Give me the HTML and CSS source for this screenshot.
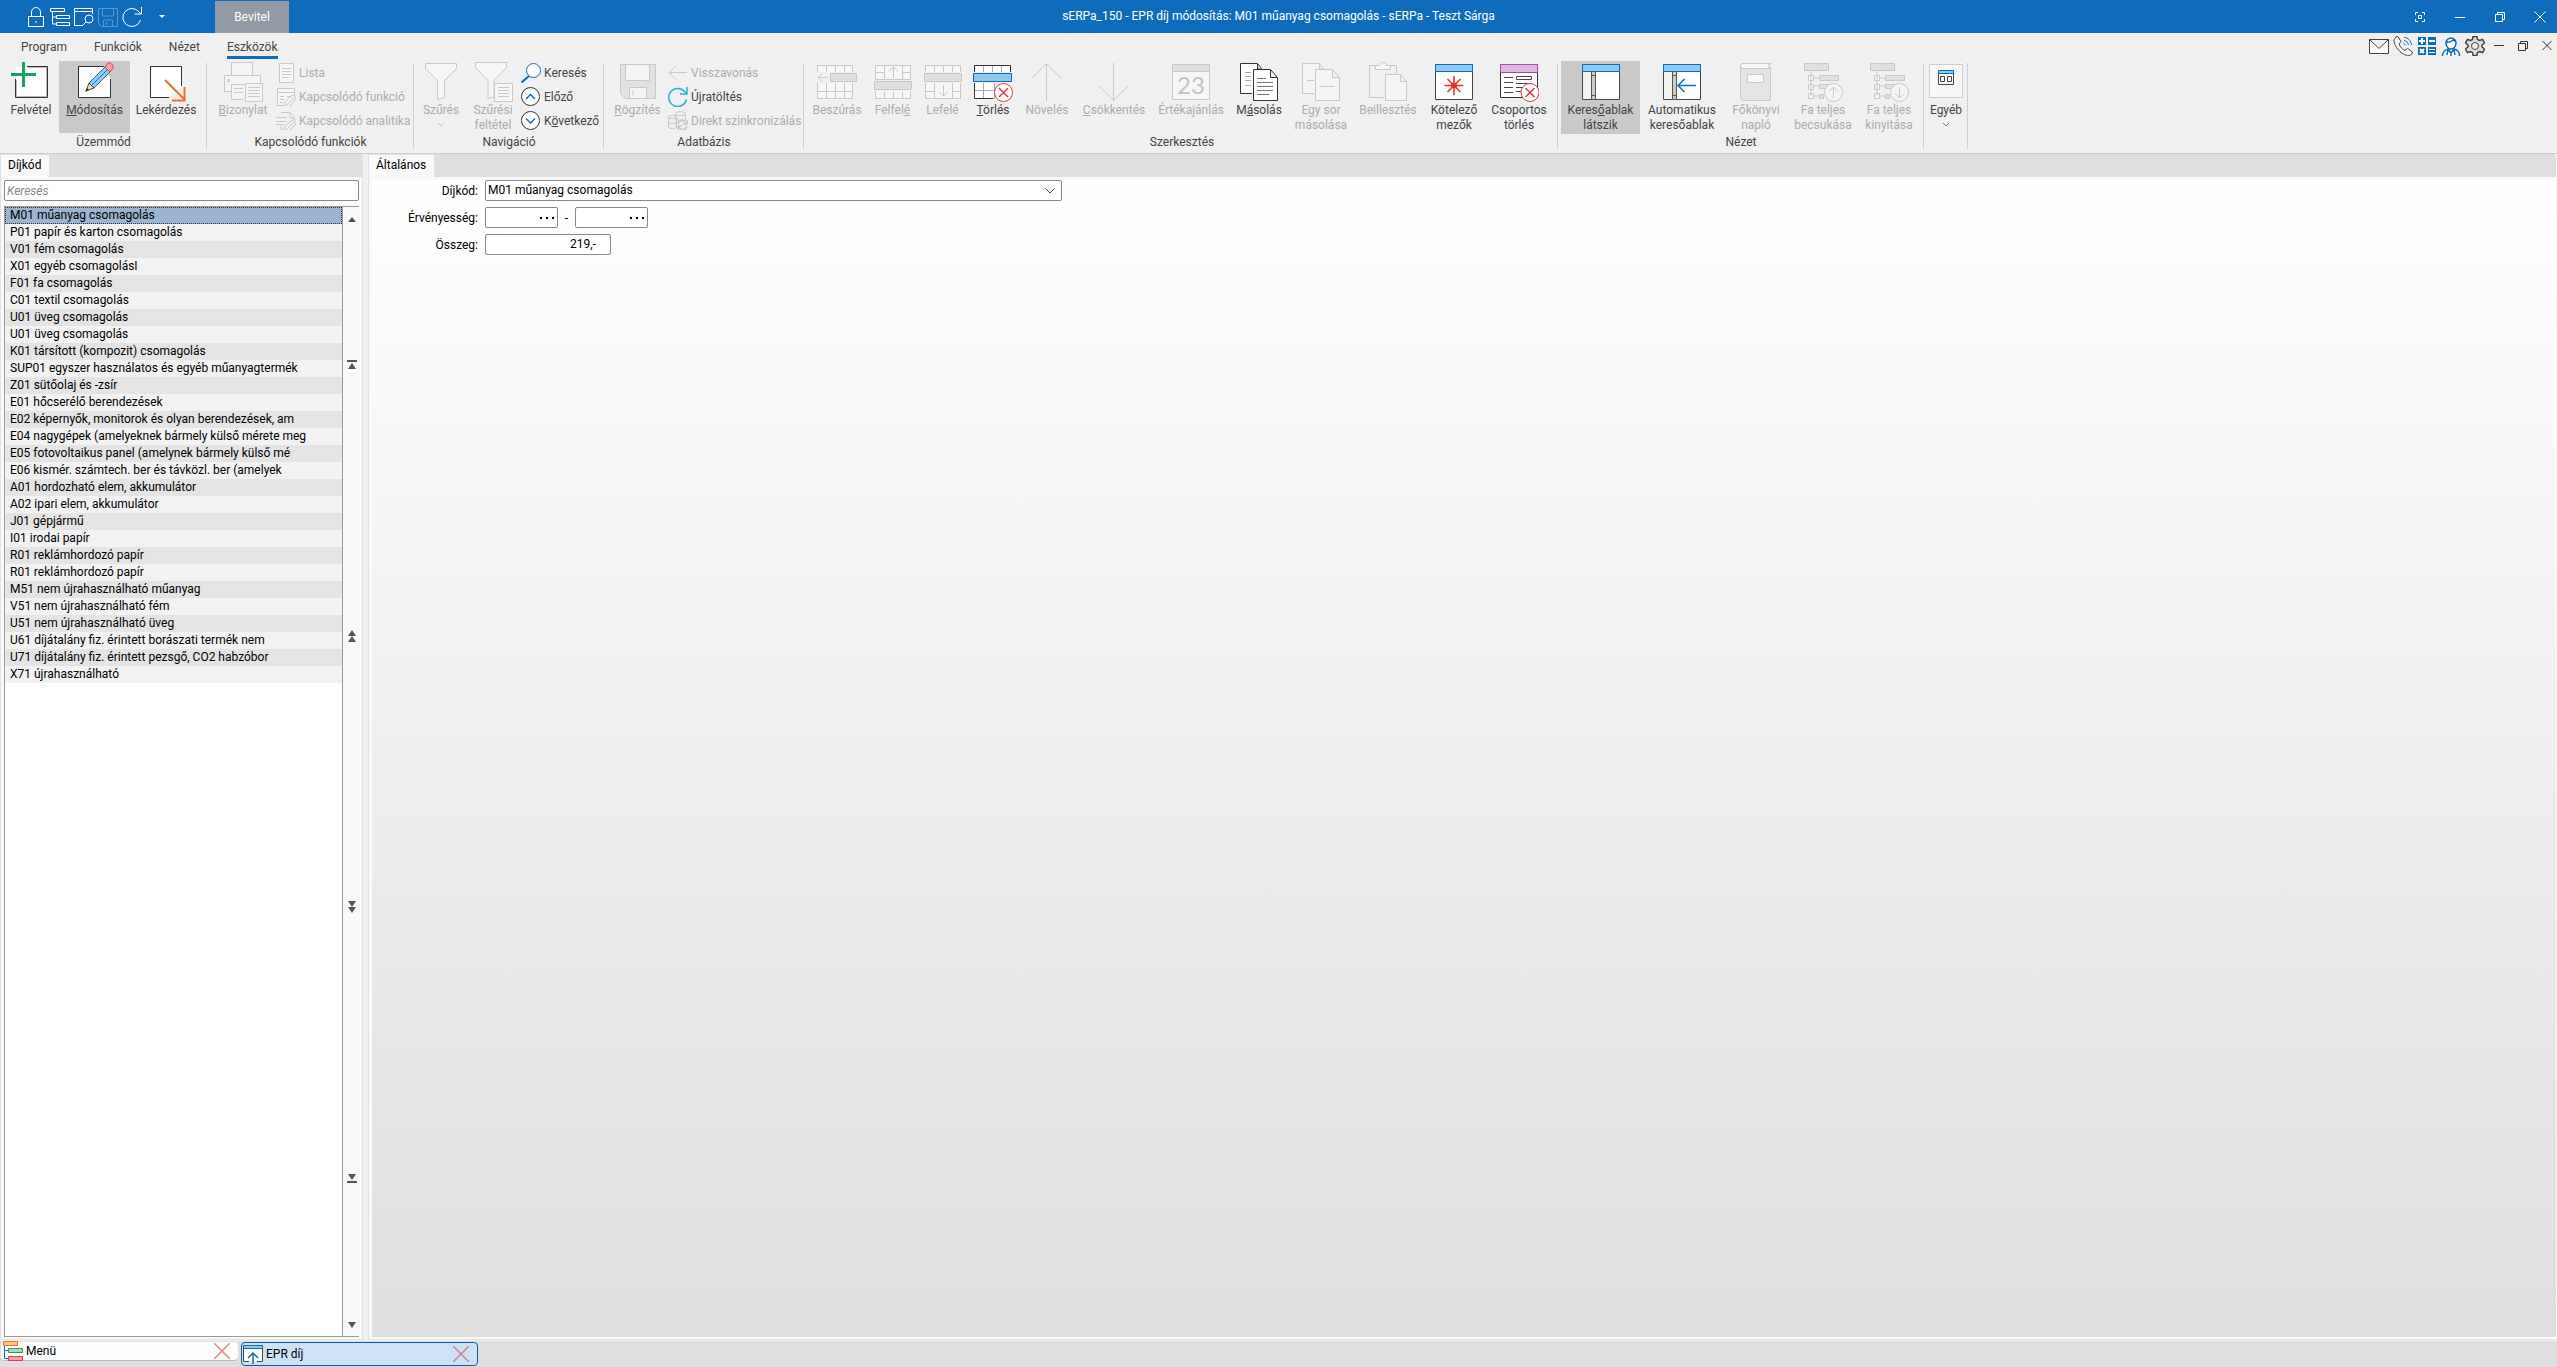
FILE: index.html
```html
<!DOCTYPE html>
<html lang="hu">

<head>
    <meta charset="UTF-8">
    <meta name="viewport" content="width=device-width, initial-scale=1.0">
    <link rel="stylesheet" href="styles.css">
    <title>sERPa_150 - EPR díj módosítás</title>
</head>

<body>

    <header class="titlebar">
        <div class="quick">
            <button aria-label="Zárolás"><svg width="20" height="20" viewBox="0 0 20 20"><path d="M2.500 9.500h15v10h-15zM5.500 9V5a4.500 4.500 0 0 1 9 0v4"/><path d="M10 14v2"/></svg></button>
            <button aria-label="Menüfa"><svg width="20" height="20" viewBox="0 0 20 20"><path d="M.5 1.500h14v3H.5zM6.500 8.500h13v3h-13zM6.500 15.500h13v3h-13zM2.500 5v12h4M2.500 10h4"/></svg></button>
            <button aria-label="Ablak keresése"><svg width="20" height="20" viewBox="0 0 20 20"><path d="M9 18.500H.5v-17h18V7M.5 4.500h18"/><circle cx="15" cy="12" r="4"/><path d="M12 15l-4 4"/></svg></button>
            <button aria-label="Mentés" disabled><svg width="20" height="20" viewBox="0 0 20 20"><path d="M.5 1.500h19v18h-16l-3-3zM4.500 2v7h11V2M5.500 19v-6h9v6M8.500 15v3"/></svg></button>
            <button aria-label="Frissítés"><svg width="20" height="20" viewBox="0 0 20 20"><path d="M18.500 13a9 9 0 1 1-1.500-8l2 2M19.500 0v7h-7"/></svg></button>
            <button class="more" aria-label="Továbbiak"><svg width="6" height="3" viewBox="0 0 6 3"><path class="solid" d="M0 0h6L3 3z"/></svg></button>
        </div>
        <button class="context-tab">Bevitel</button>
        <h1>sERPa_150 - EPR díj módosítás: M01 műanyag csomagolás - sERPa - Teszt Sárga</h1>
        <div class="window-buttons">
            <button aria-label="Fókusz"><svg width="12" height="12" viewBox="0 0 12 12"><path d="M1.500 4V1.500H4M8 1.500h2.500V4M10.500 8v2.500H8M4 10.500H1.500V8M4.500 4.500h3v3h-3z"/></svg></button>
            <button aria-label="Kis méret"><svg width="12" height="12" viewBox="0 0 12 12"><path d="M1 6.500h10"/></svg></button>
            <button aria-label="Előző méret"><svg width="12" height="12" viewBox="0 0 12 12"><path d="M1.500 3.500h7v7h-7zM3.500 3V1.500h7v7H9"/></svg></button>
            <button aria-label="Bezárás"><svg width="12" height="12" viewBox="0 0 12 12"><path d="M.5.5l11 11M11.500.5l-11 11"/></svg></button>
        </div>
    </header>

    <section class="ribbon">
        <div class="menu-row">
            <nav class="menu">
                <a href="#">Program</a>
                <a href="#">Funkciók</a>
                <a href="#">Nézet</a>
                <a href="#" class="active">Eszközök</a>
            </nav>
            <div class="menu-tools">
                <button aria-label="Levél"><svg width="20" height="20" viewBox="0 0 20 20"><path fill="#fff" stroke="#444" d="M.5 3.500h19v14H.5zM.5 3.500l9.500 9 9.500-9"/></svg></button>
                <button aria-label="Telefon"><svg width="20" height="20" viewBox="0 0 20 20"><path fill="#fff" stroke="#444" d="M3 1l2-.5L8 5.500 6 8c1 3 3 5 6 6.500l2.500-2 5 3.500-1 2.500C12 23 .500 11 1 4z"/><path stroke="#0f6cbd" d="M11 1.500c4 0 7 3 7.500 7.500M11 4.500c2.500.5 4 2 4.500 4.500M10.500 7.500l2 1.500"/></svg></button>
                <button aria-label="Számológép"><svg width="20" height="20" viewBox="0 0 20 20"><path fill="#0f6cbd" d="M1 1h8v8H1zM11 1h8v8h-8zM1 11h8v8H1zM11 11h8v8h-8z"/><path stroke="#fff" stroke-width="2" d="M2 5h6M5 2v6M12 5h6M3 13l4 4M7 13l-4 4"/><path stroke="#fff" d="M12 13.500h6M12 16.500h6"/></svg></button>
                <button aria-label="Ügyfél"><svg width="20" height="20" viewBox="0 0 20 20"><path fill="#fff" stroke="#0f6cbd" stroke-width="1.500" d="M5 7a5 5 0 0 1 10 0c0 3-2 6-5 6S5 10 5 7zM5 6c4 1 6-1 7-2l3 2M1.500 20c0-5 3-6 5.500-7l3 4 3-4c3 1 5.500 2 5.500 7M7 14l-1 5M13 14l1 5M10 16v4"/></svg></button>
                <button aria-label="Beállítások"><svg width="20" height="20" viewBox="0 0 20 20"><path fill="#ddd" stroke="#444" stroke-width="1.500" d="M8 .5h4l.5 3 2 1 3-1 2 3.500-2.500 2v2l2.500 2-2 3.500-3-1-2 1-.5 3H8l-.5-3-2-1-3 1L.5 13 3 11V9L.5 7l2-3.500 3 1 2-1z"/><circle cx="10" cy="10" r="3.500" fill="#f0f0f0" stroke="#444"/></svg></button>
                <button aria-label="Kis méret"><svg width="20" height="20" viewBox="0 0 20 20"><path stroke="#333" d="M5 9.500h10"/></svg></button>
                <button aria-label="Előző méret"><svg width="20" height="20" viewBox="0 0 20 20"><path stroke="#333" d="M5.500 7.500h7v7h-7zM7.500 7V5.500h7v7H13"/></svg></button>
                <button aria-label="Bezárás"><svg width="20" height="20" viewBox="0 0 20 20"><path stroke="#333" d="M5.500 5l9 9M14.500 5l-9 9"/></svg></button>
            </div>
        </div>

        <div class="groups">
            <div class="group mode">
                <div class="items">
                    <button class="big"><svg width="40" height="42" viewBox="0 0 40 42"><path fill="#fff" d="M5 6h31v31H5z"/><path stroke="#333" d="M16 5.500h20.500v31h-32V18"/><path stroke="#bbb" d="M17 6.500h18.500v29h-30V19"/><path stroke="#1aa35a" stroke-width="3" d="M0 13.500h25M12.500 1v25"/></svg>Felvétel</button>
                    <button class="big pressed"><svg width="40" height="42" viewBox="0 0 40 42"><path fill="#fff" stroke="#333" d="M29 5.500H3.500v31h32V18"/><path fill="#90caf0" stroke="#1b6cb5" d="M14 22L30 6l5 5-16 16z"/><path stroke="#1b6cb5" d="M16.500 24.500l16-16"/><path fill="#f5a3aa" stroke="#e03c3c" d="M30 6l3-4c2-1 6 2 5 5l-3 4z"/><path fill="#f8e08e" stroke="#444" d="M14 22l-3 8 8-3z"/><path fill="#333" d="M12 27l-2 4 4-2z"/></svg><span><u>M</u>ódosítás</span></button>
                    <button class="big"><svg width="40" height="42" viewBox="0 0 40 42"><path fill="#fff" stroke="#333" d="M23 36.500H4.500v-31h31V25"/><path stroke="#e8732a" stroke-width="2" d="M19 19l20 20M38.500 26v13.500H26"/></svg>Lekérdezés</button>
                </div>
                <div class="caption">Üzemmód</div>
            </div>

            <div class="group related">
                <div class="items">
                    <button class="big" disabled><svg width="40" height="42" viewBox="0 0 40 42"><path fill="#f4f4f4" d="M8.500 14.500v-13h21v13M8.500 30.500h-7v-16h36v7"/><path fill="#f4f4f4" d="M20 38.500H8.500v-15h13M11 27.500h9M11 31.500h9M4.500 18.500h2v2h-2z"/><path fill="#f4f4f4" d="M22.500 22.500h17v18h-17zM25 26.500h12M25 29.500h12M25 32.500h12M25 35.500h12"/></svg><span><u>B</u>izonylat</span></button>
                    <div class="stack">
                        <button class="small" disabled><svg width="20" height="20" viewBox="0 0 20 20"><path fill="#f6f6f6" d="M3.500.5h14v19h-14zM6 5.500h9M6 8.500h9M6 11.500h9M6 14.500h7"/></svg>Lista</button>
                        <button class="small" disabled><svg width="20" height="20" viewBox="0 0 20 20"><path fill="#f6f6f6" d="M9 18.500H1.500v-17h17V8M1.500 5.500h17M4 9.500h4M11 9.500h5M4 12.500h4M4 15.500h3"/><path d="M18 10l-6 7c-2 3-5 0-3-2l6-6c3-2 6 0 4 4l-5 6"/></svg>Kapcsolódó funkció</button>
                        <button class="small" disabled><svg width="20" height="20" viewBox="0 0 20 20"><path d="M5 1.500h9l4.500 5V9M14 2v5h4M0 6.500h11M0 10.500h11M0 13.500h8M5 15v3.500h3M18 11l-6 6c-2 3-5 0-3-2l6-5c3-2 6 0 4 4l-5 5"/></svg>Kapcsolódó analitika</button>
                    </div>
                </div>
                <div class="caption">Kapcsolódó funkciók</div>
            </div>

            <div class="group nav">
                <div class="items">
                    <button class="big" disabled><svg width="40" height="42" viewBox="0 0 40 42"><path fill="#f6f6f6" d="M4.500 2.500h31v5l-12 12v17l-7 2v-19l-12-12z"/></svg>Szűrés<svg class="arrow" width="8" height="6" viewBox="0 0 8 6"><path d="M1 1l3 3 3-3"/></svg></button>
                    <button class="big" disabled><svg width="40" height="42" viewBox="0 0 40 42"><path fill="#f6f6f6" d="M2.500 1.500h31v5L21 19.500V36l-6 1.500v-18L2.500 6.500z"/><path fill="#f6f6f6" d="M21.500 22.500h18v18h-18zM25 26.500h11M25 29.500h11M25 32.500h11M25 35.500h11"/></svg>Szűrési<br>feltétel</button>
                    <div class="stack">
                        <button class="small"><svg width="20" height="20" viewBox="0 0 20 20"><path stroke="#0f6cbd" stroke-width="2" d="M.5 19.500L8 13"/><circle cx="12.500" cy="7.500" r="7" fill="#fff" stroke="#0f6cbd"/></svg>Keresés</button>
                        <button class="small"><svg width="20" height="20" viewBox="0 0 20 20"><circle cx="9.500" cy="9.500" r="9" fill="#fff" stroke="#333"/><path stroke="#0f6cbd" stroke-width="1.500" d="M5 12l4.500-4.500L14 12"/></svg>Előző</button>
                        <button class="small"><svg width="20" height="20" viewBox="0 0 20 20"><circle cx="9.500" cy="9.500" r="9" fill="#fff" stroke="#333"/><path stroke="#0f6cbd" stroke-width="1.500" d="M5 7.500L9.500 12 14 7.500"/></svg><span>K<u>ö</u>vetkező</span></button>
                    </div>
                </div>
                <div class="caption">Navigáció</div>
            </div>

            <div class="group data">
                <div class="items">
                    <button class="big" disabled><svg width="40" height="42" viewBox="0 0 40 42"><path fill="#e2e2e2" d="M2.500 3.500h35v34h-30l-5-5z"/><path fill="#f4f4f4" d="M7.500 3.500h24v16h-24zM11.500 26.500h17v11h-17zM15 29.500v5"/></svg><span><u>R</u>ögzítés</span></button>
                    <div class="stack">
                        <button class="small" disabled><svg width="20" height="20" viewBox="0 0 20 20"><path d="M19 9.500H1M8 2.500l-7 7 7 7"/></svg>Visszavonás</button>
                        <button class="small"><svg width="20" height="20" viewBox="0 0 20 20"><path stroke="#2ab3c8" stroke-width="1.500" d="M18.500 12.500a9 9 0 1 1-2-8l2 2M19 0v7h-7"/></svg>Újratöltés</button>
                        <button class="small" disabled><svg width="20" height="20" viewBox="0 0 20 20"><path fill="#eee" d="M7.500 3c0-3 10-3 10 0v6h-10zM7.500 3c0 2 10 2 10 0M.5 6c0-2 8-2 8 0v10c0 2-8 2-8 0zM.5 6c0 2 8 2 8 0M.5 11c0 2 8 2 8 0"/><path stroke-width="1.500" d="M10 13c1-5 7-4 9 0V9M19 13h-4M19 15c-1 5-7 4-9 0v4M10 15h4"/></svg>Direkt szinkronizálás</button>
                    </div>
                </div>
                <div class="caption">Adatbázis</div>
            </div>

            <div class="group edit">
                <div class="items">
                    <button class="big" disabled><svg width="40" height="42" viewBox="0 0 40 42"><path fill="#f6f6f6" d="M.5 11V4.500h35V11M.5 22v15.500h35V22M9.500 5v6M18.500 5v6M27.500 5v6M9.500 22v15M18.500 22v15M27.500 22v15M1 30.500h34"/><path fill="#e0e0e0" d="M13.500 12.500h26v8h-26z"/><path d="M11 16.500H1M5 12.500l-4 4 4 4"/></svg>Beszúrás</button>
                    <button class="big" disabled><svg width="40" height="42" viewBox="0 0 40 42"><path fill="#f6f6f6" d="M2.500 18.500v-14h35v14zM2.500 30v7.500h35V30M11.500 5v13M29.500 5v13M3 11.500h8M30 11.500h7M11.500 31v6M20.500 31v6M29.500 31v6"/><path fill="#e0e0e0" d="M1.500 20.500h37v8h-37z"/><path d="M20.500 17V6M16 10.500L20.500 6l4.500 4.500"/></svg><span>Felfel<u>é</u></span></button>
                    <button class="big" disabled><svg width="40" height="42" viewBox="0 0 40 42"><path fill="#f6f6f6" d="M2.500 11V4.500h35V11M2.500 22v15.500h35V22M11.500 5v6M20.500 5v6M29.500 5v6M11.500 22v15M29.500 22v15M3 30.500h8M30 30.500h7"/><path fill="#e0e0e0" d="M1.500 12.500h37v8h-37z"/><path d="M20.500 24v11M16 30.500l4.500 4.500 4.500-4.500"/></svg>Lefelé</button>
                    <button class="big"><svg width="40" height="42" viewBox="0 0 40 42"><path fill="#fff" stroke="#aaa" d="M1.500 11V4.500h36V11M1.500 22v15.500h20V22M10.500 5v6M19.500 5v6M28.500 5v6M10.500 22v15M2 29.500h19"/><path stroke="#333" d="M1.500 11V4.500h36V11M1.500 22v15.500H20"/><path fill="#90caf0" stroke="#0f6cbd" d="M.5 12.500h38v8H.5z"/><circle cx="30.500" cy="31.500" r="9" fill="#fff" stroke="#e03c3c"/><path stroke="#e03c3c" stroke-width="1.500" d="M26 27l9 9M35 27l-9 9"/></svg><span><u>T</u>örlés</span></button>
                    <button class="big" disabled><svg width="40" height="42" viewBox="0 0 40 42"><path d="M19.500 40V3M5 17L19.500 2.500 34 17"/></svg>Növelés</button>
                    <button class="big" disabled><svg width="40" height="42" viewBox="0 0 40 42"><path d="M19.500 2v37M5 25l14.500 14.500L34 25"/></svg><span><u>C</u>sökkentés</span></button>
                    <button class="big" disabled><svg width="40" height="42" viewBox="0 0 40 42"><path fill="#f6f6f6" d="M1.500 3.500h37v35h-37z"/><path fill="#e0e0e0" d="M1.500 3.500h37v7h-37z"/><text x="20" y="33" text-anchor="middle">23</text></svg>Értékajánlás</button>
                    <button class="big"><svg width="40" height="42" viewBox="0 0 40 42"><path fill="#fff" stroke="#333" d="M13 32.500H1.500v-30h17l4 5M18.500 3v5h4"/><path stroke="#aaa" d="M6 11.500h6M6 15.500h6M6 19.500h6M6 24.500h6"/><path fill="#fff" stroke="#333" d="M14.500 8.500h17l7 8v23h-24zM31.500 9v7.500H38"/><path stroke="#777" d="M18 17.500h9M18 21.500h16M18 25.500h16M18 29.500h16M18 33.500h12"/></svg><span>M<u>á</u>solás</span></button>
                    <button class="big" disabled><svg width="40" height="42" viewBox="0 0 40 42"><path fill="#f4f4f4" d="M13 32.500H1.500v-30h17l4 5M18.500 3v5h4M6 19.500h7"/><path fill="#f4f4f4" d="M14.500 8.500h17l7 8v23h-24zM31.500 9v7.500H38M19 25.500h15"/></svg>Egy sor<br>másolása</button>
                    <button class="big" disabled><svg width="40" height="42" viewBox="0 0 40 42"><path fill="#f0f0f0" d="M16 36.500H1.500v-32h27V13"/><path fill="#f6f6f6" d="M7.500 8.500v-4h4c1-4 6-4 7 0h4v4z"/><path fill="#f4f4f4" d="M17.500 13.500h15l6 7v19h-21zM32.500 14v6.500h6"/></svg>Beillesztés</button>
                    <button class="big"><svg width="40" height="42" viewBox="0 0 40 42"><path fill="#fff" stroke="#444" d="M1.500 3.500h37v35h-37z"/><path fill="#90caf0" stroke="#0f6cbd" d="M1.500 3.500h37v7h-37z"/><path stroke="#e8302a" stroke-width="1.500" d="M20 15v19M10.500 24.500h19M13.500 18l13 13M26.500 18l-13 13"/><circle cx="20" cy="24.500" r="3" fill="#e8302a"/></svg>Kötelező<br>mezők</button>
                    <button class="big"><svg width="40" height="42" viewBox="0 0 40 42"><path fill="#fff" stroke="#333" d="M1.500 3.500h37v33h-37z"/><path fill="#dcb8dc" stroke="#a04ca0" d="M1.500 3.500h37v8h-37z"/><path stroke="#444" d="M5 16.500h9M5 21.500h9M5 26.500h9M5 31.500h9M17.500 15.500h15v3h-15zM17 22.500h15M17 26.500h8M17 30.500h5"/><circle cx="31" cy="31.500" r="9" fill="#fff" stroke="#e03c3c"/><path stroke="#e03c3c" stroke-width="1.500" d="M26.500 27l9 9M35.500 27l-9 9"/></svg>Csoportos<br>törlés</button>
                </div>
                <div class="caption">Szerkesztés</div>
            </div>

            <div class="group view">
                <div class="items">
                    <button class="big pressed"><svg width="40" height="42" viewBox="0 0 40 42"><path fill="#fff" stroke="#444" d="M1.500 3.500h37v35h-37z"/><path fill="#f2f2ef" d="M2 11h9v27H2z"/><path fill="#ccc" stroke="#555" d="M10.500 10.500h4v28h-4zM10.500 14.500h4M10.500 34.500h4"/><path fill="#90caf0" stroke="#0f6cbd" d="M1.500 3.500h37v7h-37z"/></svg><span>Keres<u>ő</u>ablak<br>látszik</span></button>
                    <button class="big"><svg width="40" height="42" viewBox="0 0 40 42"><path fill="#fff" stroke="#444" d="M1.500 3.500h37v35h-37z"/><path fill="#f2f2ef" d="M2 11h9v27H2z"/><path fill="#ccc" stroke="#555" d="M10.500 10.500h4v28h-4zM10.500 14.500h4M10.500 34.500h4"/><path fill="#90caf0" stroke="#0f6cbd" d="M1.500 3.500h37v7h-37z"/><path stroke="#0f6cbd" stroke-width="1.500" d="M34 24.500H16M22.500 18L16 24.500l6.500 6.500"/></svg>Automatikus<br>keresőablak</button>
                    <button class="big" disabled><svg width="40" height="42" viewBox="0 0 40 42"><path fill="#e4e4e4" d="M4.500 5v31c0 2 1 3.500 3 3.500h27v-32H7c-3 0-3-5 0-5h28l-2 2.500 2 2.500"/><path fill="#f8f8f8" d="M11.500 13.500h16v8h-16zM7 2.500h26v5H7c-3 0-3-5 0-5z"/></svg>Főkönyvi<br>napló</button>
                    <button class="big" disabled><svg width="40" height="42" viewBox="0 0 40 42"><path fill="#e0e0e0" d="M1.500 2.500h24v7h-24zM16.500 14.500h19v5h-19zM16.500 23.500h10v4h-10zM16.500 33.500h4v4h-4z"/><path fill="#f6f6f6" d="M8 10v25M11 17h5M11 25h5M11 35h5M5.500 14.500h5v5h-5zM5.500 23.500h5v5h-5zM5.500 32.500h5v5h-5z"/><circle cx="30.500" cy="31.500" r="9" fill="#f4f4f4"/><path d="M30.500 37V26M26 30.500l4.500-4.500 4.500 4.500"/></svg>Fa teljes<br>becsukása</button>
                    <button class="big" disabled><svg width="40" height="42" viewBox="0 0 40 42"><path fill="#e0e0e0" d="M1.500 2.500h24v7h-24zM16.500 14.500h19v5h-19zM16.500 23.500h10v4h-10zM16.500 33.500h4v4h-4z"/><path fill="#f6f6f6" d="M8 10v25M11 17h5M11 25h5M11 35h5M5.500 14.500h5v5h-5zM5.500 23.500h5v5h-5zM5.500 32.500h5v5h-5z"/><circle cx="30.500" cy="31.500" r="9" fill="#f4f4f4"/><path d="M30.500 26v11M26 32.500l4.500 4.500 4.500-4.500"/></svg>Fa teljes<br>kinyitása</button>
                </div>
                <div class="caption">Nézet</div>
            </div>

            <div class="group other">
                <div class="items">
                    <button class="big"><svg width="40" height="42" viewBox="0 0 40 42"><path fill="#f8f8f8" stroke="#ccc" d="M3.500 3.500h33v33h-33z"/><path fill="#fff" stroke="#444" d="M12.500 9.500h15v14h-15zM14.500 15.500h4v5h-4zM21.500 15.500h4v5h-4z"/><path fill="#90caf0" stroke="#0f6cbd" d="M12.500 9.500h15v3h-15z"/></svg>Egyéb<svg class="arrow" width="8" height="6" viewBox="0 0 8 6"><path d="M1 1l3 3 3-3"/></svg></button>
                </div>
            </div>
        </div>
    </section>

    <main class="workspace">
        <aside class="panel sidebar">
            <div class="tabs"><button class="tab">Díjkód</button></div>
            <div class="sidebar-body">
                <input class="search" type="text" placeholder="Keresés" aria-label="Keresés">
                <div class="list-box">
                    <ul class="list">
                        <li><button class="selected">M01 műanyag csomagolás</button></li>
                        <li><button>P01 papír és karton csomagolás</button></li>
                        <li><button>V01 fém csomagolás</button></li>
                        <li><button>X01 egyéb csomagolásI</button></li>
                        <li><button>F01 fa csomagolás</button></li>
                        <li><button>C01 textil csomagolás</button></li>
                        <li><button>U01 üveg csomagolás</button></li>
                        <li><button>U01 üveg csomagolás</button></li>
                        <li><button>K01 társított (kompozit) csomagolás</button></li>
                        <li><button>SUP01 egyszer használatos és egyéb műanyagtermék</button></li>
                        <li><button>Z01 sütőolaj és -zsír</button></li>
                        <li><button>E01 hőcserélő berendezések</button></li>
                        <li><button>E02 képernyők, monitorok és olyan berendezések, am</button></li>
                        <li><button>E04 nagygépek (amelyeknek bármely külső mérete meg</button></li>
                        <li><button>E05 fotovoltaikus panel (amelynek bármely külső mé</button></li>
                        <li><button>E06 kismér. számtech. ber és távközl. ber (amelyek</button></li>
                        <li><button>A01 hordozható elem, akkumulátor</button></li>
                        <li><button>A02 ipari elem, akkumulátor</button></li>
                        <li><button>J01 gépjármű</button></li>
                        <li><button>I01 irodai papír</button></li>
                        <li><button>R01 reklámhordozó papír</button></li>
                        <li><button>R01 reklámhordozó papír</button></li>
                        <li><button>M51 nem újrahasználható műanyag</button></li>
                        <li><button>V51 nem újrahasználható fém</button></li>
                        <li><button>U51 nem újrahasználható üveg</button></li>
                        <li><button>U61 díjátalány fiz. érintett borászati termék nem</button></li>
                        <li><button>U71 díjátalány fiz. érintett pezsgő, CO2 habzóbor</button></li>
                        <li><button>X71 újrahasználható</button></li>
                    </ul>
                    <div class="scroller">
                        <button class="step" aria-label="Fel"><svg width="10" height="10" viewBox="0 0 10 10"><path d="M1 8l4-5 4 5z"/></svg></button>
                        <button aria-label="Lista eleje"><svg width="10" height="10" viewBox="0 0 10 10"><path d="M0 0h10v2H0zM1 9l4-6 4 6z"/></svg></button>
                        <button aria-label="Lap fel"><svg width="10" height="12" viewBox="0 0 10 12"><path d="M1 6l4-6 4 6zM1 12l4-6 4 6z"/></svg></button>
                        <button aria-label="Lap le"><svg width="10" height="12" viewBox="0 0 10 12"><path d="M1 0l4 6 4-6zM1 6l4 6 4-6z"/></svg></button>
                        <button aria-label="Lista vége"><svg width="10" height="10" viewBox="0 0 10 10"><path d="M0 8h10v2H0zM1 1l4 6 4-6z"/></svg></button>
                        <button class="step" aria-label="Le"><svg width="10" height="10" viewBox="0 0 10 10"><path d="M1 2l4 6 4-6z"/></svg></button>
                    </div>
                </div>
            </div>
        </aside>

        <section class="panel content">
            <div class="tabs"><button class="tab">Általános</button></div>
            <form class="form">
                <label for="dijkod">Díjkód:</label>
                <div class="field wide">
                    <select id="dijkod">
                        <option>M01 műanyag csomagolás</option>
                    </select>
                    <svg width="10" height="6" viewBox="0 0 10 6"><path d="M.5.5L5 5 9.500.5"/></svg>
                </div>
                <label for="tol">Érvényesség:</label>
                <div class="range">
                    <div class="field date"><input id="tol" type="text"><button type="button" aria-label="Kezdő dátum"><svg width="14" height="2" viewBox="0 0 14 2"><path d="M0 0h2v2H0zM6 0h2v2H6zM12 0h2v2h-2z"/></svg></button></div>
                    <span>-</span>
                    <div class="field date"><input id="ig" type="text" aria-label="Érvényesség vége"><button type="button" aria-label="Záró dátum"><svg width="14" height="2" viewBox="0 0 14 2"><path d="M0 0h2v2H0zM6 0h2v2H6zM12 0h2v2h-2z"/></svg></button></div>
                </div>
                <label for="osszeg">Összeg:</label>
                <div class="field amount"><input id="osszeg" type="text" value="219,-"></div>
            </form>
        </section>
    </main>

    <footer class="taskbar">
        <div class="task">
            <button class="task-name"><svg width="20" height="20" viewBox="0 0 20 20"><path stroke="#0f6cbd" d="M1.500 4v13.500H5M1.500 9.500H5"/><path fill="#fbc77a" stroke="#e8732a" d="M.5.5h14v4H.5z"/><path fill="#a8dcb8" stroke="#1aa35a" d="M5.500 7.500h14v4h-14z"/><path fill="#f5a3a3" stroke="#e03c3c" d="M5.500 15.500h14v4h-14z"/></svg>Menü</button>
            <button class="close" aria-label="Menü bezárása"><svg width="16" height="16" viewBox="0 0 16 16"><path d="M0 0l16 16M16 0L0 16"/></svg></button>
        </div>
        <div class="task current">
            <button class="task-name"><svg width="20" height="20" viewBox="0 0 20 20"><path fill="#fff" stroke="#444" d="M6 17.500H.5V1.500h19v16H14"/><path fill="#90caf0" stroke="#0f6cbd" d="M.5 1.500h19v3H.5z"/><path stroke="#0f6cbd" stroke-width="1.500" d="M10 20V9M5 14l5-5 5 5"/></svg>EPR díj</button>
            <button class="close" aria-label="EPR díj bezárása"><svg width="16" height="16" viewBox="0 0 16 16"><path d="M0 0l16 16M16 0L0 16"/></svg></button>
        </div>
    </footer>

</body>

</html>
```
FILE: styles.css
```css
* {
    box-sizing: border-box;
}

body {
    font-family: Roboto, 'Open Sans', sans-serif;
    font-size: 12px;
    line-height: 15px;
    margin: 0;
    height: 100vh;
    display: flex;
    flex-direction: column;
    background-color: #f0f0f0;
    color: #000;
}

button,
input,
select {
    font: inherit;
    color: inherit;
    margin: 0;
    padding: 0;
    border: none;
    background: none;
}

button {
    display: flex;
    align-items: center;
    justify-content: center;
}

svg {
    display: block;
    flex: none;
    fill: none;
}

/* Title bar */
.titlebar {
    display: grid;
    grid-template-columns: 215px 74px 1fr 160px;
    height: 33px;
    background-color: #0f6cbd;
    color: #fff;
}

.titlebar svg {
    stroke: #fff;
}

.titlebar .solid {
    fill: #fff;
    stroke: none;
}

.quick {
    display: flex;
    align-items: center;
    gap: 4px;
    padding-left: 26px;
}

.quick button:disabled {
    opacity: 0.3;
}

.quick .more {
    margin-left: 13px;
}

.context-tab {
    margin-top: 1px;
    background-color: #929aa5;
}

.titlebar h1 {
    margin: 0;
    padding-right: 129px;
    font-size: 12px;
    font-weight: normal;
    line-height: 33px;
    text-align: center;
}

.window-buttons {
    display: grid;
    grid-template-columns: repeat(4, 40px);
    margin-left: 3px;
}

/* Ribbon */
.ribbon {
    color: #444;
    border-bottom: 1px solid #cfcfcf;
}

.menu-row {
    display: flex;
    justify-content: space-between;
    height: 26px;
}

.menu {
    display: flex;
    gap: 27px;
    padding: 7px 0 0 21px;
}

.menu a {
    color: inherit;
    text-decoration: none;
    height: 19px;
}

.menu .active {
    border-bottom: 3px solid #0f6cbd;
}

.menu-tools {
    display: flex;
    align-items: center;
    gap: 4px;
}

.groups {
    display: flex;
    height: 94px;
}

.group {
    display: flex;
    flex-direction: column;
    justify-content: space-between;
    padding: 2px 3px 3px;
    position: relative;
}

/* separator between the groups */
.group::after {
    content: "";
    position: absolute;
    top: 4px;
    bottom: 4px;
    right: 0;
    width: 1px;
    background-color: #cfcfcf;
}

.items {
    display: grid;
    height: 72px;
}

.caption {
    text-align: center;
}

.mode {
    width: 207px;
}

.mode .items {
    grid-template-columns: 56px 71px 72px;
}

.related {
    width: 207px;
}

.related .items {
    grid-template-columns: 66px 1fr;
}

.nav {
    width: 190px;
}

.nav .items {
    grid-template-columns: 48px 56px 1fr;
}

.data {
    width: 200px;
}

.data .items {
    grid-template-columns: 61px 1fr;
}

.edit {
    width: 754px;
    padding-left: 5px;
}

.edit .items {
    grid-template-columns: 56px 55px 45px 56px 52px 82px 72px 64px 60px 74px 58px 72px;
}

.view {
    width: 366px;
}

.view .items {
    grid-template-columns: 79px 84px 64px 70px 62px;
}

.other {
    width: 44px;
    padding-left: 0;
    padding-right: 0;
}

.big {
    flex-direction: column;
    justify-content: flex-start;
    white-space: nowrap;
    padding-bottom: 1px;
}

.big .arrow {
    margin-top: 4px;
    stroke: #777;
}

.big svg text {
    fill: #c4c4c4;
    stroke: none;
    font-family: Lato, sans-serif;
    font-size: 24px;
}

.pressed {
    background-color: #c9c9c9;
}

.ribbon button:disabled {
    color: #adadad;
}

.ribbon button:disabled svg {
    stroke: #c8c8c8;
}

.stack {
    display: grid;
    grid-template-rows: repeat(3, 24px);
}

.small {
    justify-content: flex-start;
    gap: 3px;
    white-space: nowrap;
}

/* Panels */
.workspace {
    flex: 1;
    display: flex;
    gap: 5px;
    min-height: 0;
    padding-bottom: 1px;
}

.panel {
    display: flex;
    flex-direction: column;
    border: 1px solid #e2e2e2;
    border-top: none;
    background-color: #f9f9f9;
}

.sidebar {
    width: 363px;
}

.content {
    flex: 1;
    border-right: none;
    padding-right: 1px;
}

.tabs {
    display: flex;
    height: 23px;
    background-color: #dfdfdf;
}

.tab {
    margin-top: 1px;
    padding: 0 8px 2px 7px;
    background-color: #f9f9f9;
}

.sidebar-body {
    flex: 1;
    display: flex;
    flex-direction: column;
    gap: 5px;
    padding: 3px 3px 2px;
}

.search {
    height: 21px;
    padding: 0 2px;
    border: 1px solid #888;
    border-radius: 2px;
    background-color: #fff;
}

.search::placeholder {
    color: #888;
    font-style: italic;
}

.list-box {
    flex: 1;
    display: flex;
    border: 1px solid #999;
    border-right: none;
}

.list {
    flex: 1;
    margin: 0;
    padding: 0;
    list-style: none;
    background-color: #fff;
    border-right: 1px solid #999;
}

.list li {
    height: 17px;
    background-color: #f2f2f2;
}

.list li:nth-child(odd) {
    background-color: #e4e4e4;
}

.list button {
    width: 100%;
    height: 17px;
    padding-left: 5px;
    justify-content: flex-start;
    white-space: nowrap;
}

.list .selected {
    background-color: #9ab4d2;
    border: 1px dotted #333;
    padding-left: 4px;
}

.scroller {
    width: 16px;
    display: flex;
    flex-direction: column;
    padding-left: 2px;
}

.scroller button {
    flex: 1;
}

.scroller .step {
    flex: 0 0 23px;
}

.scroller svg {
    fill: #555;
}

/* Form */
.form {
    flex: 1;
    display: grid;
    grid-template-columns: 106px 1fr;
    grid-auto-rows: 21px;
    align-content: start;
    gap: 6px 7px;
    margin: 3px 0 2px 3px;
    background: linear-gradient(to bottom, #ffffff, #dedede);
}

.form label {
    text-align: right;
    line-height: 23px;
}

.field {
    display: flex;
    align-items: center;
    height: 21px;
    border: 1px solid #888;
    border-radius: 2px;
    background-color: #fff;
}

.field input,
.field select {
    flex: 1;
    width: 100%;
    min-width: 0;
    padding: 0 2px;
    appearance: none;
}

.field button {
    padding-right: 3px;
}

.field button svg {
    fill: #000;
}

.wide {
    width: 577px;
    padding-right: 6px;
}

.wide svg {
    stroke: #444;
}

.range {
    display: flex;
}

.range span {
    width: 17px;
    text-align: center;
    line-height: 23px;
}

.date {
    width: 73px;
}

.amount {
    width: 126px;
}

.amount input {
    text-align: right;
    padding-right: 14px;
}

/* Open windows */
.taskbar {
    display: flex;
    align-items: flex-start;
    gap: 3px;
    height: 26px;
    padding: 1px;
    background-color: #dedede;
}

.task {
    display: flex;
    justify-content: space-between;
    width: 237px;
    height: 19px;
    padding: 0 8px 0 2px;
    border-bottom: 1px solid #bbb;
    border-radius: 4px;
    background-color: #fdfdfd;
}

.task-name {
    gap: 3px;
}

.task.current {
    height: 24px;
    padding: 0 8px 0 1px;
    border: 1px solid #0f5ba3;
    background-color: #cce3f7;
}

.close svg {
    stroke: #ee8080;
    stroke-width: 1.5;
}

.current .close svg {
    stroke: #d88090;
}
```
